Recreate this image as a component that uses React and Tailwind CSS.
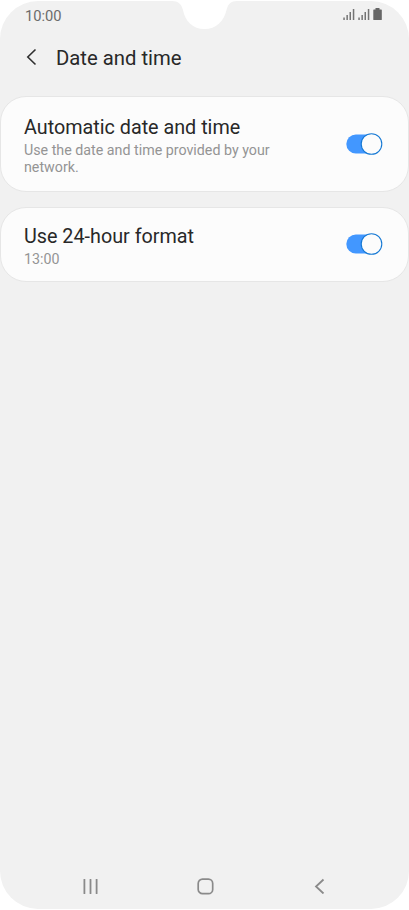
import { useState } from 'react'

const SETTINGS = [
  {
    key: 'auto',
    title: 'Automatic date and time',
    text: 'Use the date and time provided by your network.',
    card: 'h-[96px] pt-[19px]',
    control: 'mt-[17px]',
  },
  {
    key: 'format24',
    title: 'Use 24-hour format',
    text: '13:00',
    card: 'h-[75px] pt-[17px]',
    control: 'mt-2',
  },
]

function Signal() {
  return (
    <svg width="12" height="12" viewBox="0 0 12 12" fill="#747474">
      <rect x="0.3" y="9.5" width="1.5" height="2.5" />
      <rect x="3.4" y="7" width="1.5" height="5" />
      <rect x="6.5" y="4" width="1.5" height="8" />
      <rect x="9.8" y="1" width="1.5" height="11" />
    </svg>
  )
}

function Toggle({ on, label, onClick }) {
  return (
    <button role="switch" aria-checked={on} aria-label={label} onClick={onClick} className="block w-[37px] h-[22px] shrink-0">
      <svg width="37" height="22" viewBox="0 0 37 22">
        <rect x="0.3" y="1.4" width="34" height="19.2" rx="9.6" fill={on ? '#4297ff' : '#c4c4c4'} />
        <circle cx={on ? 25.5 : 10.9} cy="11" r="10.3" fill="#fcfcfc" stroke={on ? '#1679d4' : '#a0a0a0'} strokeWidth="1.1" />
      </svg>
    </button>
  )
}

export default function App() {
  const [values, setValues] = useState({ auto: true, format24: true })

  function toggle(key) {
    setValues({ ...values, [key]: !values[key] })
  }

  return (
    <div className="w-[409px] h-[910px] bg-white pt-px pb-px font-['Roboto',sans-serif]">
      <div className="relative h-full bg-[#f1f1f1] rounded-[38px] flex flex-col">
        {/* Camera notch */}
        <svg className="absolute left-[170px] -top-px" width="69" height="30" viewBox="0 0 69 30">
          <path d="M0 0V1H2C8 1 11.500 4 13 10C15 21.500 23 29 34.500 29S54 21.500 56.500 10C58 4 61 1 67 1H69V0Z" fill="#fff" />
        </svg>

        {/* Status bar */}
        <div className="h-7 pl-[25px] pr-[27px] flex justify-between">
          <span className="pt-[5px] text-[14.7px] leading-5 text-[#6b6b6b]">10:00</span>
          <div className="flex gap-[3px] pt-[7px]">
            <Signal />
            <Signal />
            <svg width="9" height="12" viewBox="0 0 9 12" fill="#666">
              <path d="M2.500 0h4v1.500H8.200q.6 0 .6.600v9.300q0 .6-.6.600H.9q-.6 0-.6-.6V2.100q0-.6.6-.6H2.500z" />
            </svg>
          </div>
        </div>

        {/* Header */}
        <div className="h-[67px] pl-[26px] flex items-start">
          <svg className="mt-[19px]" width="12" height="18" viewBox="0 0 12 18" fill="none" stroke="#303030" strokeWidth="1.6">
            <path d="M9.500 1.500L1.800 9L9.500 16.500" />
          </svg>
          <h1 className="ml-[18px] mt-[17px] text-[20.3px] leading-6 text-[#282828]">Date and time</h1>
        </div>

        {/* Settings */}
        <div className="flex flex-col gap-[15px]">
          {SETTINGS.map(s => (
            <div key={s.key} className={`bg-[#fcfcfc] border border-[#e6e6e6] rounded-[26px] pl-[23px] pr-[25px] flex justify-between ${s.card}`}>
              <div className="w-[262px]">
                <h2 className="text-[19.75px] leading-6 text-[#282828]">{s.title}</h2>
                <p className="text-[14.25px] leading-[17px] mt-[2px] text-[#949494]">{s.text}</p>
              </div>
              <div className={`self-start ${s.control}`}>
                <Toggle on={values[s.key]} label={s.title} onClick={() => toggle(s.key)} />
              </div>
            </div>
          ))}
        </div>

        {/* Navigation bar */}
        <div className="mt-auto h-[46px] px-[83px] flex justify-between items-center">
          <svg width="16" height="16" viewBox="0 0 16 16" fill="#8a8a8a">
            <rect x="0.500" y="1" width="1.800" height="15" rx="0.500" />
            <rect x="6.600" y="1" width="1.800" height="15" rx="0.500" />
            <rect x="12.700" y="1" width="1.800" height="15" rx="0.500" />
          </svg>
          <svg className="mr-[3px]" width="17" height="17" viewBox="0 0 17 17" fill="none" stroke="#8a8a8a" strokeWidth="1.700">
            <rect x="1.200" y="1.200" width="14.500" height="14.500" rx="4.300" />
          </svg>
          <svg width="12" height="16" viewBox="0 0 12 16" fill="none" stroke="#8a8a8a" strokeWidth="1.800">
            <path d="M9.500 1.500L2 8.500L9.500 15.500" />
          </svg>
        </div>
      </div>
    </div>
  )
}
